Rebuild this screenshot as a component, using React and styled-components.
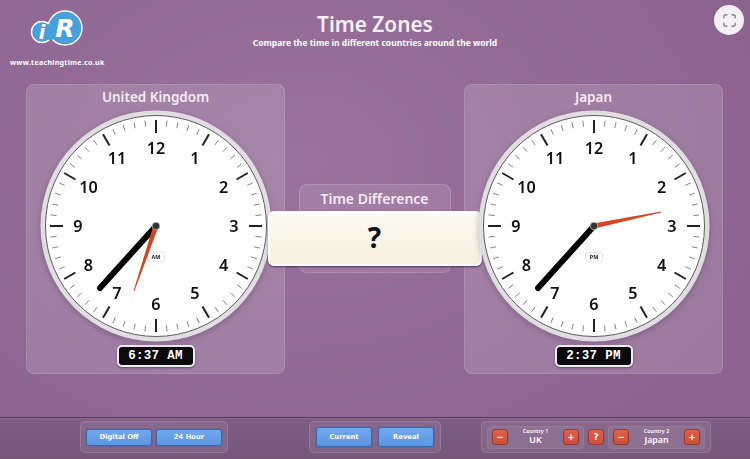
import React from "react";
import styled, { createGlobalStyle } from "styled-components";
import { Maximize } from "lucide-react";

const Global = createGlobalStyle`
	html, body {
		margin: 0;
		padding: 0;
	}
	body {
		width: 750px;
		height: 459px;
		overflow: hidden;
		font-family: "Noto Sans", "Open Sans", sans-serif;
	}
`

const Page = styled.div`
	width: 750px;
	height: 459px;
	display: flex;
	flex-direction: column;
	background: radial-gradient(ellipse 480px 340px at 40% 35%, #9a729d 0%, #93699a00 100%), #8d6491;
	color: #fff;
`

const Header = styled.header`
	height: 84px;
	flex: none;
	display: grid;
	grid-template-columns: 1fr auto 1fr;
	padding: 0 6px;
	box-sizing: border-box;
`

const Brand = styled.div`
	display: flex;
	flex-direction: column;
	align-items: flex-start;
	padding: 9px 0 0 4px;
`

const Site = styled.div`
	font-size: 7.1px;
	font-weight: 700;
	line-height: 10px;
	letter-spacing: 0.28px;
	margin-top: 6px;
`

const TitleBlock = styled.div`
	text-align: center;
	padding-top: 9px;
`

const Title = styled.h1`
	margin: 0;
	font-size: 20.8px;
	font-weight: 600;
	line-height: 30px;
	color: #f6eff6;
`

const Subtitle = styled.p`
	margin: 0;
	font-size: 8.5px;
	font-weight: 700;
	line-height: 10px;
	margin-top: -1px;
`

const Corner = styled.div`
	display: flex;
	justify-content: flex-end;
	padding-top: 5px;
`

const RoundButton = styled.button`
	width: 30px;
	height: 30px;
	padding: 0;
	border: none;
	border-radius: 50%;
	background: #f4f1f4;
	color: #6d6a6e;
	display: flex;
	align-items: center;
	justify-content: center;
`

const Main = styled.main`
	flex: 1;
	display: flex;
	justify-content: space-between;
	align-items: flex-start;
	padding: 0 27px 0 26px;
`

const Panel = styled.section`
	width: 259px;
	height: 290px;
	box-sizing: border-box;
	border-radius: 8px;
	border: 1px solid rgba(255, 255, 255, 0.12);
	background: rgba(255, 255, 255, 0.14);
	display: flex;
	flex-direction: column;
	align-items: center;
	padding-top: 2px;
`

const PanelTitle = styled.h2`
	margin: 0 0 1px;
	font-size: 13.5px;
	font-weight: 600;
	line-height: 21px;
	color: #f4ecf4;
`

const Face = styled.svg`
	display: block;
	margin-top: 1px;
	filter: drop-shadow(0 2px 3px rgba(60, 30, 70, 0.3));
`

const Digital = styled.div`
	width: 78px;
	height: 22px;
	box-sizing: border-box;
	margin-top: 3px;
	border: 2px solid #f1eef1;
	border-radius: 5px;
	background: #0b0b0d;
	color: #fff;
	font-family: "Liberation Mono", monospace;
	font-weight: 700;
	font-size: 12.5px;
	line-height: 18px;
	letter-spacing: 0.3px;
	text-align: center;
	white-space: pre;
	box-shadow: 0 1px 2px rgba(50, 20, 60, 0.5);
`

const DiffPanel = styled.section`
	width: 152px;
	height: 89px;
	margin-top: 100px;
	box-sizing: border-box;
	position: relative;
	border-radius: 8px;
	border: 1px solid rgba(255, 255, 255, 0.14);
	background: rgba(255, 255, 255, 0.1);
	text-align: center;
`

const DiffTitle = styled.h2`
	margin: 0;
	font-size: 14px;
	font-weight: 600;
	line-height: 27px;
	color: #f4ecf4;
`

const Answer = styled.div`
	position: absolute;
	left: 50%;
	top: 26px;
	transform: translateX(-50%);
	width: 214px;
	height: 55px;
	box-sizing: border-box;
	border: 2px solid #fff;
	border-radius: 6px;
	background: linear-gradient(#fdfaf1, #f6f0e0);
	box-shadow: 0 1px 2px rgba(40, 20, 50, 0.7);
	color: #111;
	font-size: 28px;
	font-weight: 700;
	line-height: 49px;
`

const Toolbar = styled.footer`
	height: 42px;
	flex: none;
	box-sizing: border-box;
	border-top: 1px solid #523858;
	box-shadow: inset 0 1px 0 rgba(255, 255, 255, 0.1);
	background: linear-gradient(#7f5d85, #765679);
	display: flex;
	align-items: center;
	padding: 0 0 3px 80px;
`

const Group = styled.div`
	height: 32px;
	width: ${p => p.$width}px;
	margin-right: ${p => p.$after || 0}px;
	box-sizing: border-box;
	border-radius: 5px;
	border: 1px solid rgba(255, 255, 255, 0.13);
	background: rgba(255, 255, 255, 0.08);
	display: flex;
	align-items: center;
	justify-content: center;
	gap: ${p => p.$gap}px;
`

const BlueButton = styled.button`
	width: ${p => p.$width}px;
	height: ${p => p.$height}px;
	padding: 0;
	border: 1px solid #3c68a8;
	border-radius: 3px;
	background: linear-gradient(#6fa9ee, #5c95e2);
	color: #fff;
	font-family: "DejaVu Sans", sans-serif;
	font-size: 6.8px;
	font-weight: 700;
	box-shadow: 0 0 0 1px rgba(70, 100, 170, 0.35);
`

const RedButton = styled.button`
	width: 16px;
	height: 16px;
	padding: 0;
	border: 1px solid #93392f;
	border-radius: 3px;
	background: linear-gradient(#dd6149, #cc4f3b);
	color: #fff;
	font-family: "DejaVu Sans", sans-serif;
	font-size: 9px;
	font-weight: 700;
	line-height: 13px;
	flex: none;
`

const Country = styled.div`
	width: 97px;
	height: 23px;
	box-sizing: border-box;
	padding: 0 4px;
	border-radius: 4px;
	border: 1px solid rgba(255, 255, 255, 0.08);
	background: rgba(255, 255, 255, 0.07);
	display: flex;
	align-items: center;
	justify-content: space-between;
`

const CountryText = styled.div`
	text-align: center;
	display: flex;
	flex-direction: column;
	color: #fff;
`

const CountryLabel = styled.span`
	font-size: 5.4px;
	font-weight: 600;
	line-height: 7px;
`

const CountryName = styled.span`
	font-size: 8.8px;
	font-weight: 600;
	line-height: 11px;
`

const LogoMark = styled.svg`
	display: block;
	margin-left: 20px;
`

const Logo = () => (
	<LogoMark width="60" height="42" viewBox="0 0 60 42">
		<circle cx="12" cy="23" r="10.5" fill="#47a0dc" stroke="#fff" strokeWidth="1.4" />
		<circle cx="35" cy="19" r="17" fill="#47a0dc" stroke="#fff" strokeWidth="1.4" />
		<circle cx="20" cy="23" r="8" fill="#47a0dc" />
		<text x="12" y="30" textAnchor="middle" fill="#fff" fontFamily="DejaVu Sans" fontWeight="700" fontStyle="italic" fontSize="19">i</text>
		<text x="35" y="28" textAnchor="middle" fill="#fff" fontFamily="DejaVu Sans" fontWeight="700" fontStyle="italic" fontSize="25">R</text>
	</LogoMark>
)

const polar = (deg, r) => {
	const a = (deg - 90) * Math.PI / 180;
	return [116 + r * Math.cos(a), 116 + r * Math.sin(a)];
}

const Clock = ({ minuteEnd, hourEnd, meridiem }) => {
	const ticks = [];
	for (let i = 0; i < 60; i++) {
		const major = i % 5 === 0;
		const [x1, y1] = polar(i * 6, major ? 93 : 100);
		const [x2, y2] = polar(i * 6, 106);
		ticks.push(
			<line key={i} x1={x1} y1={y1} x2={x2} y2={y2}
				stroke={major ? "#222" : "#666"} strokeWidth={major ? 2 : 0.8} />
		);
	}
	// tapered hour hand, wide at the pin and blunt at the tip
	const dx = hourEnd[0], dy = hourEnd[1];
	const len = Math.hypot(dx, dy);
	const nx = -dy / len, ny = dx / len;
	const hand = [
		[nx * 2.6, ny * 2.6],
		[-nx * 2.6, -ny * 2.6],
		[dx - nx * 0.4, dy - ny * 0.4],
		[dx + nx * 0.4, dy + ny * 0.4],
	].map(([x, y]) => `${116 + x},${116 + y}`).join(" ");
	return (
		<Face width="232" height="232" viewBox="0 0 232 232">
			<circle cx="116" cy="116" r="115.5" fill="#e0dee0" />
			<circle cx="116" cy="116" r="110.5" fill="#fff" stroke="#5d5a5e" strokeWidth="1" />
			{ticks}
			{[...Array(12)].map((_, i) => {
				const [x, y] = polar((i + 1) * 30, 78);
				return (
					<text key={i} x={x} y={y + 5.8} textAnchor="middle" fill="#111"
						fontFamily="Noto Sans" fontWeight="600" fontSize="16.2">{i + 1}</text>
				);
			})}
			<rect x="107.5" y="142" width="17" height="10" rx="3" fill="#fff" stroke="#ddd" strokeWidth="0.8" />
			<text x="116" y="149" textAnchor="middle" fill="#222" fontFamily="Noto Sans" fontWeight="700" fontSize="5.4">{meridiem}</text>
			<line x1="116" y1="116" x2={116 + minuteEnd[0]} y2={116 + minuteEnd[1]} stroke="#000" strokeWidth="6" strokeLinecap="round" />
			<polygon fill="#d8431f" points={hand} />
			<circle cx="116" cy="116" r="3.8" fill="#333" stroke="#bbb" strokeWidth="0.8" />
		</Face>
	)
}

const Zone = ({ name, time, ...clock }) => (
	<Panel>
		<PanelTitle>{name}</PanelTitle>
		<Clock {...clock} />
		<Digital>{time}</Digital>
	</Panel>
)

const App = () => (
	<Page>
		<Global />
		<Header>
			<Brand>
				<Logo />
				<Site>www.teachingtime.co.uk</Site>
			</Brand>
			<TitleBlock>
				<Title>Time Zones</Title>
				<Subtitle>Compare the time in different countries around the world</Subtitle>
			</TitleBlock>
			<Corner>
				<RoundButton><Maximize size={15} strokeWidth={1.8} /></RoundButton>
			</Corner>
		</Header>
		<Main>
			<Zone name="United Kingdom" time="6:37 AM" meridiem="AM" minuteEnd={[-56, 62]} hourEnd={[-22, 65]} />
			<DiffPanel>
				<DiffTitle>Time Difference</DiffTitle>
				<Answer>?</Answer>
			</DiffPanel>
			<Zone name="Japan" time="2:37 PM" meridiem="PM" minuteEnd={[-56, 62]} hourEnd={[67, -14]} />
		</Main>
		<Toolbar>
			<Group $width={148} $after={81} $gap={4}>
				<BlueButton $width={66} $height={17}>Digital Off</BlueButton>
				<BlueButton $width={66} $height={17}>24 Hour</BlueButton>
			</Group>
			<Group $width={132} $after={40} $gap={6}>
				<BlueButton $width={56} $height={20}>Current</BlueButton>
				<BlueButton $width={56} $height={20}>Reveal</BlueButton>
			</Group>
			<Group $width={230} $gap={4}>
				<Country>
					<RedButton>−</RedButton>
					<CountryText><CountryLabel>Country 1</CountryLabel><CountryName>UK</CountryName></CountryText>
					<RedButton>+</RedButton>
				</Country>
				<RedButton>?</RedButton>
				<Country>
					<RedButton>−</RedButton>
					<CountryText><CountryLabel>Country 2</CountryLabel><CountryName>Japan</CountryName></CountryText>
					<RedButton>+</RedButton>
				</Country>
			</Group>
		</Toolbar>
	</Page>
)

export default App
